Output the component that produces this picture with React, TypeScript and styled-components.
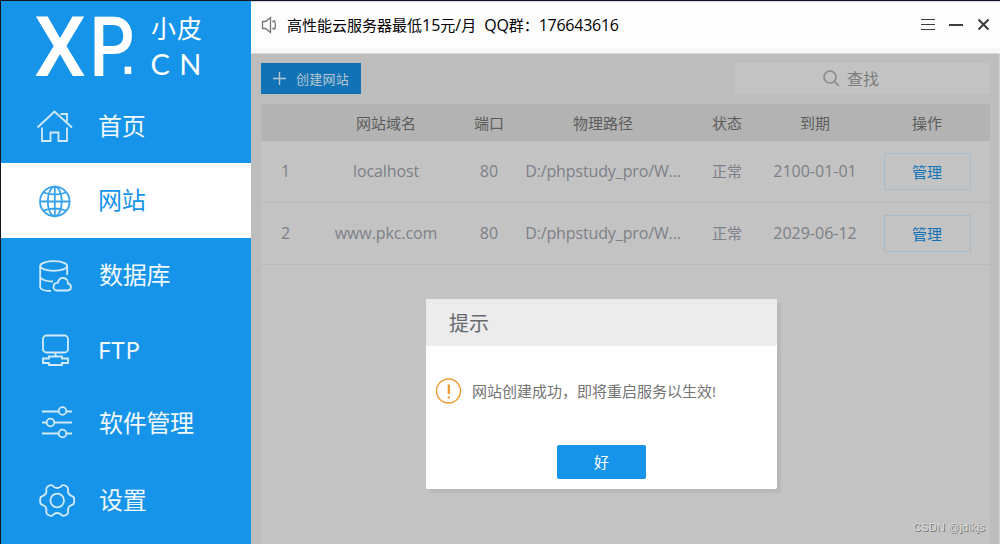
import React from "react";
import styled, { createGlobalStyle } from "styled-components";

const BLUE = "#1694e9";

const Global = createGlobalStyle`
  * { box-sizing: border-box; }
  body { margin: 0; overflow: hidden; font-family: "Open Sans", "Noto Sans CJK SC", sans-serif; }
  button { font: inherit; padding: 0; cursor: pointer; }
`;

const Window = styled.div`
  position: relative;
  display: flex;
  width: 1000px;
  height: 544px;
  border-top: 1px solid #12141f;
  border-left: 1px solid #12141f;
  overflow: hidden;
`;

const Sidebar = styled.nav`
  width: 250px;
  flex: none;
  display: flex;
  flex-direction: column;
  background: ${BLUE};
`;

const Logo = styled.svg`
  display: block;
  width: 250px;
  height: 88px;
  flex: none;
  fill: #fff;
  overflow: visible;
`;

const NavItem = styled.a<{ $height?: number; $active?: boolean }>`
  display: flex;
  align-items: center;
  flex: none;
  height: ${(p) => p.$height ?? 75}px;
  padding-left: 35px;
  color: ${(p) => (p.$active ? BLUE : "#f2f9ff")};
  background: ${(p) => (p.$active ? "#fff" : "transparent")};
`;

const NavIcon = styled.svg`
  width: 40px;
  height: 40px;
  flex: none;
  fill: none;
  stroke: currentColor;
  stroke-width: 1.8;
  opacity: 0.86;
`;

const NavLabel = styled.span<{ $indent?: number; $spacing?: number }>`
  margin: -1px 0 0 ${(p) => p.$indent ?? 22}px;
  font-family: "Noto Sans", "Noto Sans CJK SC", sans-serif;
  font-size: 24px;
  line-height: 36px;
  letter-spacing: ${(p) => p.$spacing ?? -0.3}px;
  white-space: nowrap;
`;

const Main = styled.main`
  flex: 1;
  min-width: 0;
  display: flex;
  flex-direction: column;
`;

const TitleBar = styled.header`
  display: flex;
  align-items: center;
  height: 53px;
  flex: none;
  padding: 0 10px 5px 9px;
  border-top: 1px solid #d6d6e4;
  border-bottom: 1px solid #dadada;
  background: linear-gradient(#fdfdfd 46px, #f7f7f7 46px);
`;

const Notice = styled.span`
  margin-left: 9px;
  font-size: 15px;
  line-height: 22px;
  color: #000;
  white-space: pre;
`;

const Latin = styled.span<{ $spacing: number; $size?: number }>`
  font-size: ${(p) => p.$size ?? 16}px;
  letter-spacing: ${(p) => p.$spacing}px;
`;

const WindowControls = styled.svg`
  margin-left: auto;
  width: 72px;
  height: 20px;
  fill: none;
  stroke: #3c3c3c;
`;

const Content = styled.section`
  flex: 1;
  min-height: 0;
  display: flex;
  flex-direction: column;
  gap: 10px;
  padding: 9px 9px 0 10px;
  background: #bdbdbd;
  border-right: 1px solid #cfcfcf;
`;

const Toolbar = styled.div`
  display: flex;
  justify-content: space-between;
  height: 31px;
  flex: none;
`;

const CreateButton = styled.button`
  display: flex;
  align-items: center;
  width: 100px;
  padding-left: 12px;
  border: 0;
  background: #1173b6;
  color: #b9c6d0;
  font-size: 13px;
  line-height: 20px;
  span { margin: 1px 0 0 10px; letter-spacing: 0.25px; }
`;

const Search = styled.div`
  display: flex;
  align-items: center;
  justify-content: center;
  gap: 7px;
  width: 255px;
  padding: 0 25px 0 2px;
  background: #c3c3c3;
  color: #7c7c7c;
  font-size: 16px;
  line-height: 24px;
`;

const Table = styled.div`
  flex: 1;
  background: #c3c3c3;
  color: #7d8087;
  font-size: 15px;
`;

const Row = styled.div<{ $head?: boolean }>`
  display: grid;
  grid-template-columns: 49px 152px 54px 174px 74px 102px 122px;
  align-items: center;
  justify-items: center;
  height: ${(p) => (p.$head ? 37 : 62)}px;
  border-bottom: 1px solid ${(p) => (p.$head ? "#b0b0b0" : "#b9b9b9")};
  background: ${(p) => (p.$head ? "#b3b3b3" : "transparent")};
  color: ${(p) => (p.$head ? "#5c5c5c" : "inherit")};
  line-height: 22px;
  white-space: nowrap;
  > span { margin-top: ${(p) => (p.$head ? 2 : -1)}px; }
`;

const ManageButton = styled.button`
  width: 87px;
  height: 37px;
  border: 1px solid #a9b9c5;
  background: transparent;
  color: #1173b6;
  font-size: 15px;
`;

const Dialog = styled.div`
  position: absolute;
  left: 425px;
  top: 298px;
  width: 351px;
  height: 190px;
  display: flex;
  flex-direction: column;
  border-radius: 0 2px 2px 0;
  background: #fff;
  box-shadow: 4px 4px 2px rgba(0, 0, 0, 0.055);
`;

const DialogTitle = styled.h2`
  margin: 0;
  height: 47px;
  flex: none;
  padding-left: 23px;
  border-radius: 0 2px 2px 0;
  background: #ececec;
  color: #666a6f;
  font-size: 20px;
  font-weight: 400;
  line-height: 49px;
`;

const DialogBody = styled.div`
  display: flex;
  align-items: center;
  gap: 10px;
  height: 90px;
  padding-left: 9px;
  color: #737373;
  font-size: 15px;
  line-height: 22px;
`;

const OkButton = styled.button`
  align-self: center;
  width: 89px;
  height: 34px;
  margin-top: 9px;
  padding-bottom: 1px;
  border: 0;
  border-radius: 2px;
  background: ${BLUE};
  color: #fff;
  font-size: 15px;
`;

const Watermark = styled.div`
  position: absolute;
  right: 15px;
  bottom: 9px;
  color: #dcdcdc;
  font-family: "Liberation Sans", sans-serif;
  font-size: 11px;
  line-height: 15px;
  letter-spacing: 0.18px;
  text-shadow: 1px 1px 0 #777;
`;

const sites = [
  { id: 1, domain: "localhost", expires: "2100-01-01" },
  { id: 2, domain: "www.pkc.com", expires: "2029-06-12" },
];

export default function App() {
  return (
    <Window>
      <Global />
      <Sidebar>
        <Logo viewBox="0 0 250 88">
          <g fontFamily="Roboto" fontWeight="500">
            <text x="33" y="75" fontSize="84" textLength="52" lengthAdjust="spacingAndGlyphs">X</text>
            <text x="88.5" y="75" fontSize="84" textLength="45" lengthAdjust="spacingAndGlyphs">P</text>
          </g>
          <text x="117.5" y="73" fontSize="68" fontFamily="Liberation Sans">.</text>
          <text x="150" y="37" fontSize="25" fontFamily="Noto Sans CJK SC" textLength="51">小皮</text>
          <text x="149.5" y="74" fontSize="29" fontFamily="Lato" letterSpacing="9.5">CN</text>
        </Logo>
        <NavItem $height={74}>
          <NavIcon viewBox="0 0 40 40">
            <path d="M1.5 21.5 L18.5 5.5 L36 21.5 M24.5 8 H31 V15.5 M6 21.5 V35 H14.5 V26.5 H22.5 V35 H31 V21.5" />
          </NavIcon>
          <NavLabel>首页</NavLabel>
        </NavItem>
        <NavItem $active>
          <NavIcon viewBox="0 0 40 40">
            <circle cx="18.8" cy="20.5" r="14.8" />
            <ellipse cx="18.8" cy="20.5" rx="7" ry="14.8" />
            <path d="M18.8 5.7 V35.3 M4 20.5 H33.6 M7.5 11.5 Q18.8 15.5 30 11.5 M7.5 29.5 Q18.8 25.5 30 29.5" />
          </NavIcon>
          <NavLabel>网站</NavLabel>
        </NavItem>
        <NavItem>
          <NavIcon viewBox="0 0 40 40">
            <ellipse cx="17.7" cy="10" rx="13.5" ry="4.8" />
            <path d="M4.2 10 V31.5 C5 34 10 35 15 35 M31.2 10 V19 M4.2 21.5 C6.5 24 12 25.5 17 25.5 M20.5 34.5 H31.5 C36 34.3 36 28.5 32 27.7 C32.5 20.5 22.5 20 22 26.7 C16.5 27 16 34 20.5 34.5 Z" />
          </NavIcon>
          <NavLabel $indent={23}>数据库</NavLabel>
        </NavItem>
        <NavItem>
          <NavIcon viewBox="0 0 40 40">
            <rect x="7" y="4.5" width="25" height="17" rx="3.5" />
            <path d="M19.5 21.5 V25.5 M13 25.5 H26 V27.5 H32 V32 H26 V34 H13 V32 H7 V27.5 H13 Z" />
          </NavIcon>
          <NavLabel $spacing={0.8}>FTP</NavLabel>
        </NavItem>
        <NavItem $height={70}>
          <NavIcon viewBox="0 0 40 40">
            <path d="M6 8.5 H22.5 M30.5 8.5 H36 M6 19.5 H10.5 M18.5 19.5 H36 M6 30.5 H22.5 M30.5 30.5 H36" />
            <circle cx="26.5" cy="8" r="3.8" />
            <circle cx="14.5" cy="19.5" r="3.8" />
            <circle cx="26.5" cy="30.5" r="3.8" />
          </NavIcon>
          <NavLabel $indent={23}>软件管理</NavLabel>
        </NavItem>
        <NavItem $height={84}>
          <NavIcon viewBox="0 0 40 40">
            <circle cx="21.2" cy="20.5" r="6.8" />
            <path d="M18 7 Q21.2 9 24.5 7 Q26.3 4.3 29 5.5 L31 6.7 Q32.5 7.8 32 10.8 Q31.8 14 35 15.7 Q38.2 16.5 38.2 19 V22 Q38.2 24.5 35 25.3 Q31.8 27 32 30.2 Q32.5 33.2 31 34.3 L29 35.5 Q26.3 36.7 24.5 34 Q21.2 32 18 34 Q16.1 36.7 13.4 35.5 L11.4 34.3 Q9.9 33.2 10.4 30.2 Q10.6 27 7.4 25.3 Q4.2 24.5 4.2 22 V19 Q4.2 16.5 7.4 15.7 Q10.6 14 10.4 10.8 Q9.9 7.8 11.4 6.7 L13.4 5.5 Q16.1 4.3 18 7 Z" />
          </NavIcon>
          <NavLabel $indent={23}>设置</NavLabel>
        </NavItem>
      </Sidebar>

      <Main>
        <TitleBar>
          <svg width="18" height="20" viewBox="0 0 18 20" fill="none" stroke="#757575" strokeWidth="1.3">
            <path d="M2.5 6.5 H5.5 L10.5 2.5 V17.5 L5.5 13.5 H2.5 Z M12.5 6 L13.6 7.2 M12.5 14 L13.6 12.8 M14 5 Q17 10 14 15" />
          </svg>
          <Notice>
            高性能云服务器最低<Latin $spacing={0}>15</Latin>元<Latin $spacing={0}>/</Latin>月
            <Latin $spacing={-0.2}>{"  QQ"}</Latin>群：<Latin $spacing={-0.25}>176643616</Latin>
          </Notice>
          <WindowControls viewBox="0 0 72 20">
            <path d="M3 4.5 H17 M3 9.5 H17 M3 14.5 H17" strokeWidth="1" />
            <path d="M31 10 H45" strokeWidth="2" />
            <path d="M60.5 4.5 L70.5 14.5 M70.5 4.5 L60.5 14.5" strokeWidth="2" />
          </WindowControls>
        </TitleBar>

        <Content>
          <Toolbar>
            <CreateButton>
              <svg width="13" height="13" viewBox="0 0 13 13" stroke="#b9c6d0" strokeWidth="1.4">
                <path d="M0 6.5 H13 M6.5 0 V13" />
              </svg>
              <span>创建网站</span>
            </CreateButton>
            <Search>
              <svg width="17" height="17" viewBox="0 0 17 17" fill="none" stroke="#8b8b8b" strokeWidth="1.7">
                <circle cx="7" cy="7" r="6" />
                <path d="M11.3 11.3 L16 16" />
              </svg>
              查找
            </Search>
          </Toolbar>

          <Table>
            <Row $head>
              <span />
              <span>网站域名</span>
              <span>端口</span>
              <span>物理路径</span>
              <span>状态</span>
              <span>到期</span>
              <span>操作</span>
            </Row>
            {sites.map((s) => (
              <Row key={s.id}>
                <Latin $spacing={0}>{s.id}</Latin>
                <Latin $spacing={-0.1}>{s.domain}</Latin>
                <Latin $spacing={0}>80</Latin>
                <Latin $spacing={-0.13}>D:/phpstudy_pro/W...</Latin>
                <span>正常</span>
                <Latin $spacing={0}>{s.expires}</Latin>
                <ManageButton>管理</ManageButton>
              </Row>
            ))}
          </Table>
        </Content>
      </Main>

      <Dialog role="dialog">
        <DialogTitle>提示</DialogTitle>
        <DialogBody>
          <svg width="27" height="27" viewBox="0 0 27 27" fill="none" stroke="#f0982a">
            <circle cx="13.5" cy="13" r="12" strokeWidth="1.3" />
            <path d="M13.8 6.5 V16 M13.8 18.5 V20.5" strokeWidth="2.2" />
          </svg>
          <span>网站创建成功，即将重启服务以生效!</span>
        </DialogBody>
        <OkButton>好</OkButton>
      </Dialog>

      <Watermark>CSDN @jdlkjs</Watermark>
    </Window>
  );
}
